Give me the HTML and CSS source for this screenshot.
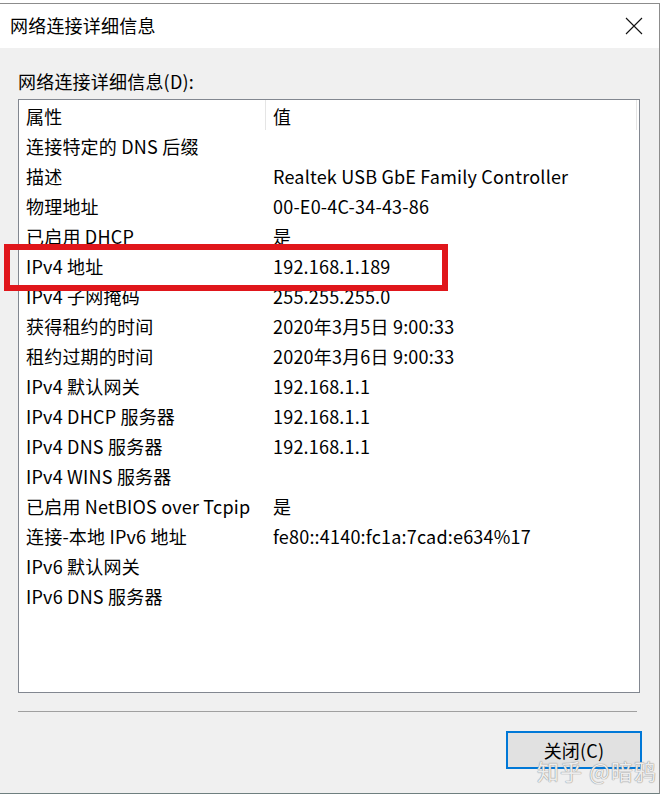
FILE: index.html
```html
<!DOCTYPE html>
<html lang="zh-CN">
<head>
<meta charset="utf-8">
<title>网络连接详细信息</title>
<link rel="stylesheet" href="styles.css">
</head>
<body>
<div class="window">
  <div class="titlebar">
    <span class="title">网络连接详细信息</span>
    <svg class="close" width="18" height="18" viewBox="0 0 18 18"><path d="M1 1 L17 17 M17 1 L1 17" stroke="#111" stroke-width="1.1" fill="none"/></svg>
  </div>
  <div class="content">
    <div class="label">网络连接详细信息(D):</div>
    <div class="listbox">
      <div class="header">
        <div class="hcell h1">属性</div>
        <div class="hcell h2">值</div>
      </div>
      <div class="row"><span class="c1">连接特定的 DNS 后缀</span><span class="c2"></span></div>
      <div class="row"><span class="c1">描述</span><span class="c2">Realtek USB GbE Family Controller</span></div>
      <div class="row"><span class="c1">物理地址</span><span class="c2">00-E0-4C-34-43-86</span></div>
      <div class="row"><span class="c1">已启用 DHCP</span><span class="c2">是</span></div>
      <div class="row"><span class="c1">IPv4 地址</span><span class="c2">192.168.1.189</span></div>
      <div class="row"><span class="c1">IPv4 子网掩码</span><span class="c2">255.255.255.0</span></div>
      <div class="row"><span class="c1">获得租约的时间</span><span class="c2">2020年3月5日 9:00:33</span></div>
      <div class="row"><span class="c1">租约过期的时间</span><span class="c2">2020年3月6日 9:00:33</span></div>
      <div class="row"><span class="c1">IPv4 默认网关</span><span class="c2">192.168.1.1</span></div>
      <div class="row"><span class="c1">IPv4 DHCP 服务器</span><span class="c2">192.168.1.1</span></div>
      <div class="row"><span class="c1">IPv4 DNS 服务器</span><span class="c2">192.168.1.1</span></div>
      <div class="row"><span class="c1">IPv4 WINS 服务器</span><span class="c2"></span></div>
      <div class="row"><span class="c1">已启用 NetBIOS over Tcpip</span><span class="c2">是</span></div>
      <div class="row"><span class="c1">连接-本地 IPv6 地址</span><span class="c2">fe80::4140:fc1a:7cad:e634%17</span></div>
      <div class="row"><span class="c1">IPv6 默认网关</span><span class="c2"></span></div>
      <div class="row"><span class="c1">IPv6 DNS 服务器</span><span class="c2"></span></div>
    </div>
    <div class="separator"></div>
    <div class="footer">
      <button class="btn">关闭(C)</button>
    </div>
  </div>
  <div class="highlight"></div>
  <div class="watermark">知乎 @暗鸦</div>
</div>
</body>
</html>
```
FILE: styles.css
```css
html, body {
  margin: 0;
  padding: 0;
  background: #ffffff;
}
body {
  font-family: "Noto Sans CJK SC", "Noto Sans", sans-serif;
  font-size: 18px;
  letter-spacing: 0.2px;
  color: #000;
}
.window {
  position: relative;
  margin-top: 3px;
  width: 659px;
  height: 789px;
  border-top: 1px solid #8c8c8c;
  border-right: 1px solid #8c8c8c;
  border-bottom: 1px solid #6f7f7f;
  background: #f0f0f0;
  display: flex;
  flex-direction: column;
}
.titlebar {
  height: 44px;
  background: #ffffff;
  display: flex;
  align-items: center;
  justify-content: space-between;
  padding: 0 16px 0 10px;
}
.title {
  font-size: 18px;
  line-height: 24px;
  margin-top: -3px;
}
.close {
  display: block;
}
.content {
  padding: 22px 0 0 18px;
  display: flex;
  flex-direction: column;
}
.label {
  line-height: 26px;
  height: 31px;
  margin-top: -2px;
}
.listbox {
  width: 620px;
  height: 592px;
  border: 1px solid #828790;
  background: #ffffff;
  display: flex;
  flex-direction: column;
}
.header {
  display: flex;
  height: 31px;
}
.hcell {
  line-height: 28px;
  padding-top: 2px;
  padding-left: 7px;
  border-right: 1px solid #e5e5e5;
  height: 30px;
  box-sizing: border-box;
}
.h1 {
  width: 247px;
}
.h2 {
  width: 371px;
}
.row {
  display: flex;
  height: 30px;
  line-height: 30px;
}
.c1 {
  width: 247px;
  padding-left: 7px;
  box-sizing: border-box;
  white-space: nowrap;
}
.c2 {
  padding-left: 7px;
  white-space: nowrap;
}
.separator {
  width: 619px;
  height: 1px;
  background: #a0a0a0;
  margin-top: 18px;
}
.footer {
  display: flex;
  justify-content: flex-end;
  padding-right: 17px;
  margin-top: 19px;
}
.btn {
  width: 136px;
  height: 38px;
  background: #e1e1e1;
  border: 2px solid #0078d7;
  font-family: "Noto Sans CJK SC", "Noto Sans", sans-serif;
  font-size: 18px;
  letter-spacing: 0.2px;
  color: #000;
  padding: 0;
}
.highlight {
  position: absolute;
  left: 4px;
  top: 240px;
  width: 432px;
  height: 35px;
  border: 6px solid #e0161b;
}
.watermark {
  position: absolute;
  left: 537px;
  top: 751px;
  font-size: 22px;
  line-height: 30px;
  color: rgba(255, 255, 255, 0.85);
  text-shadow: 0 0 1px #8a8a8a, 0 0 1px #8a8a8a;
  letter-spacing: 1px;
}
```
